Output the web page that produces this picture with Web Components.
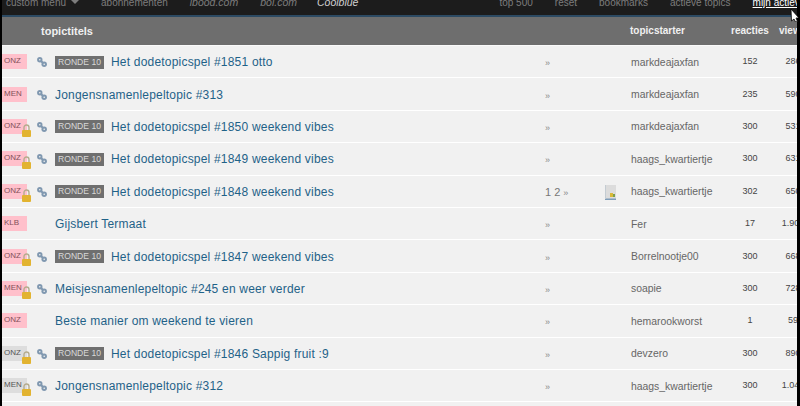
<!DOCTYPE html>
<html>
<head>
<meta charset="utf-8">
<title>topics</title>
<style>
  html, body { margin: 0; height: 100%; overflow: hidden; background: #000; }
  body { font-family: "Liberation Sans", Arial, sans-serif; }
</style>
</head>
<body>
<forum-page>
  <top-nav slot="nav"></top-nav>
  <topic-head slot="head"></topic-head>
  <topic-row tag="ONZ" ronde title-text="Het dodetopicspel #1851 otto" starter="markdeajaxfan" replies="152" views="286"></topic-row>
  <topic-row tag="MEN" title-text="Jongensnamenlepeltopic #313" starter="markdeajaxfan" replies="235" views="590"></topic-row>
  <topic-row tag="ONZ" locked ronde title-text="Het dodetopicspel #1850 weekend vibes" starter="markdeajaxfan" replies="300" views="531"></topic-row>
  <topic-row tag="ONZ" locked ronde title-text="Het dodetopicspel #1849 weekend vibes" starter="haags_kwartiertje" replies="300" views="631"></topic-row>
  <topic-row tag="ONZ" locked ronde pages title-text="Het dodetopicspel #1848 weekend vibes" starter="haags_kwartiertje" replies="302" views="650"></topic-row>
  <topic-row tag="KLB" nolink title-text="Gijsbert Termaat" starter="Fer" replies="17" views="1.905"></topic-row>
  <topic-row tag="ONZ" locked ronde title-text="Het dodetopicspel #1847 weekend vibes" starter="Borrelnootje00" replies="300" views="668"></topic-row>
  <topic-row tag="MEN" locked title-text="Meisjesnamenlepeltopic #245 en weer verder" starter="soapie" replies="300" views="728"></topic-row>
  <topic-row tag="ONZ" nolink title-text="Beste manier om weekend te vieren" starter="hemarookworst" replies="1" views="59"></topic-row>
  <topic-row tag="ONZ" grey locked ronde title-text="Het dodetopicspel #1846 Sappig fruit :9" starter="devzero" replies="300" views="890"></topic-row>
  <topic-row tag="MEN" grey locked title-text="Jongensnamenlepeltopic #312" starter="haags_kwartiertje" replies="300" views="1.045"></topic-row>
</forum-page>

<script>
const columns = '53px 489px 61px 26px 99px 40px 46px'

customElements.define('forum-page', class extends HTMLElement {
  constructor() {
    super()
    this.attachShadow({ mode: 'open' }).innerHTML = `
      <style>
        :host { display: block; height: 406px; overflow: hidden; padding: 0 3px 0 2px; background: #000; position: relative; }
        .inner { background: #f1f1f1; height: 406px; overflow: hidden; }
        svg { position: absolute; left: 790px; top: 9px; }
      </style>
      <div class="inner">
        <slot name="nav"></slot>
        <slot name="head"></slot>
        <slot></slot>
      </div>
      <svg width="10" height="13" viewBox="0 0 10 13"><path d="M1 0l8 9H6l1.500 3.500-2 .5L4 10 1.500 12z" fill="#fff" stroke="#000" stroke-width=".8"/></svg>`
  }
})

customElements.define('top-nav', class extends HTMLElement {
  constructor() {
    super()
    this.attachShadow({ mode: 'open' }).innerHTML = `
      <style>
        :host { display: block; height: 17px; box-sizing: border-box; background: #1c1c1c; border-bottom: 2px solid #2c4a63; overflow: hidden; color: #7d7d7d; font-size: 10px; white-space: nowrap; }
        nav { display: flex; align-items: flex-end; height: 15px; padding: 0 0 5px 4px; box-sizing: border-box; }
        span { line-height: 14px; flex: none; margin-right: 22px; }
        i { font-style: italic; font-size: 10.5px; }
        .caret { display: inline-block; border: 4px solid transparent; border-top-color: #7d7d7d; border-bottom: 0; margin: 0 0 2px 5px; }
        .bol { margin-right: 20px; }
        .cool { color: #cfcfcf; margin-right: 141px; }
        .on { color: #fff; text-decoration: underline; }
      </style>
      <nav>
        <span>custom menu<b class="caret"></b></span>
        <span>abonnementen</span>
        <span><i>ibood.com</i></span>
        <span class="bol"><i>bol.com</i></span>
        <span class="cool"><i>Coolblue</i></span>
        <span>top 500</span>
        <span>reset</span>
        <span>bookmarks</span>
        <span>actieve topics</span>
        <span class="on">mijn actieve</span>
      </nav>`
  }
})

customElements.define('topic-head', class extends HTMLElement {
  constructor() {
    super()
    this.attachShadow({ mode: 'open' }).innerHTML = `
      <style>
        :host { display: grid; grid-template-columns: 39px 589px 101px 48px 60px; height: 29px; box-sizing: border-box; padding-bottom: 1px; border-bottom: 1px solid #fafafa; align-items: center; background: #6e6e6e; color: #f0f0f0; font-size: 10px; font-weight: bold; white-space: nowrap; }
        .main { font-size: 11px; }
      </style>
      <span></span><span class="main">topictitels</span><span>topicstarter</span><span>reacties</span><span>views</span>`
  }
})

const rowTemplate = document.createElement('template')
rowTemplate.innerHTML = `
  <style>
    :host { display: grid; grid-template-columns: ${columns}; height: 32.4px; box-sizing: border-box; padding-top: 1px; align-items: center; border-bottom: 1px solid #fff; background: #f1f1f1; color: #666; font-size: 10.4px; white-space: nowrap; }
    .state { display: flex; align-items: center; height: 100%; position: relative; }
    .tag { width: 25px; height: 15px; margin-top: -1px; box-sizing: border-box; padding-left: 2px; background: #ffc0cb; color: #84505a; font-size: 8px; line-height: 13px; }
    :host([grey]) .tag { background: #ddd; color: #555; }
    .lock { position: absolute; left: 19px; top: 12px; display: none; }
    :host([locked]) .lock { display: block; }
    .link { margin-left: 10px; }
    :host([nolink]) .link { visibility: hidden; }
    .title { display: flex; align-items: center; gap: 7px; }
    .ronde { display: none; width: 49px; height: 13px; background: #6f6f6f; color: #d8d8d8; font-size: 8.6px; line-height: 13px; text-align: center; }
    :host([ronde]) .ronde { display: block; }
    a { color: #1f6288; font-size: 12px; letter-spacing: .2px; text-decoration: none; }
    .pager { color: #777; font-size: 11px; padding-left: 1px; }
    .pager small { font-size: 9px; color: #888; }
    .new { visibility: hidden; margin-top: 1px; }
    :host([pages]) .new { visibility: visible; }
    .num { text-align: center; color: #444; font-size: 9px; margin-top: -2px; }
  </style>
  <div class="state">
    <span class="tag"></span>
    <svg class="lock" width="11" height="14" viewBox="0 0 11 14"><path d="M3 6V3.500a2.500 2.500 0 0 1 5 0V6" fill="none" stroke="#b5ac8e" stroke-width="1.400"/><rect x="1" y="6" width="9" height="7" rx="1" fill="#e2b330"/></svg>
    <svg class="link" width="10" height="10" viewBox="0 0 10 10"><g fill="#8098b0"><circle cx="2.800" cy="2.800" r="2.700"/><circle cx="7.200" cy="7.200" r="2.700"/><path d="M2.500 4l1.500-1.500 3.500 3.500-1.500 1.500z"/></g><circle cx="2.800" cy="2.800" r=".8" fill="#f1f1f1"/><circle cx="7.200" cy="7.200" r=".8" fill="#f1f1f1"/></svg>
  </div>
  <div class="title"><span class="ronde">RONDE 10</span><a href="#"></a></div>
  <span class="pager"></span>
  <svg class="new" width="11" height="15" viewBox="0 0 11 15"><rect width="11" height="15" fill="#dcdcdc"/><rect y="13.500" width="11" height="1.500" fill="#7f9db9"/><rect x="0" y="0" width="1" height="14" fill="#c4ccd2"/><rect x="5" y="8" width="3" height="4" fill="#d9b93a"/><rect x="8" y="9" width="2" height="3" fill="#7fa04a"/></svg>
  <span class="starter"></span>
  <span class="num replies"></span>
  <span class="num views"></span>`

customElements.define('topic-row', class extends HTMLElement {
  constructor() {
    super()
    this.attachShadow({ mode: 'open' })
    this.shadowRoot.appendChild(rowTemplate.content.cloneNode(true))
  }

  connectedCallback() {
    const root = this.shadowRoot
    root.querySelector('.tag').textContent = this.getAttribute('tag')
    root.querySelector('a').textContent = this.getAttribute('title-text')
    root.querySelector('.pager').innerHTML = (this.hasAttribute('pages') ? '1 2 ' : '') + '<small>»</small>'
    root.querySelector('.starter').textContent = this.getAttribute('starter')
    root.querySelector('.replies').textContent = this.getAttribute('replies')
    root.querySelector('.views').textContent = this.getAttribute('views')
  }
})
</script>
</body>
</html>
